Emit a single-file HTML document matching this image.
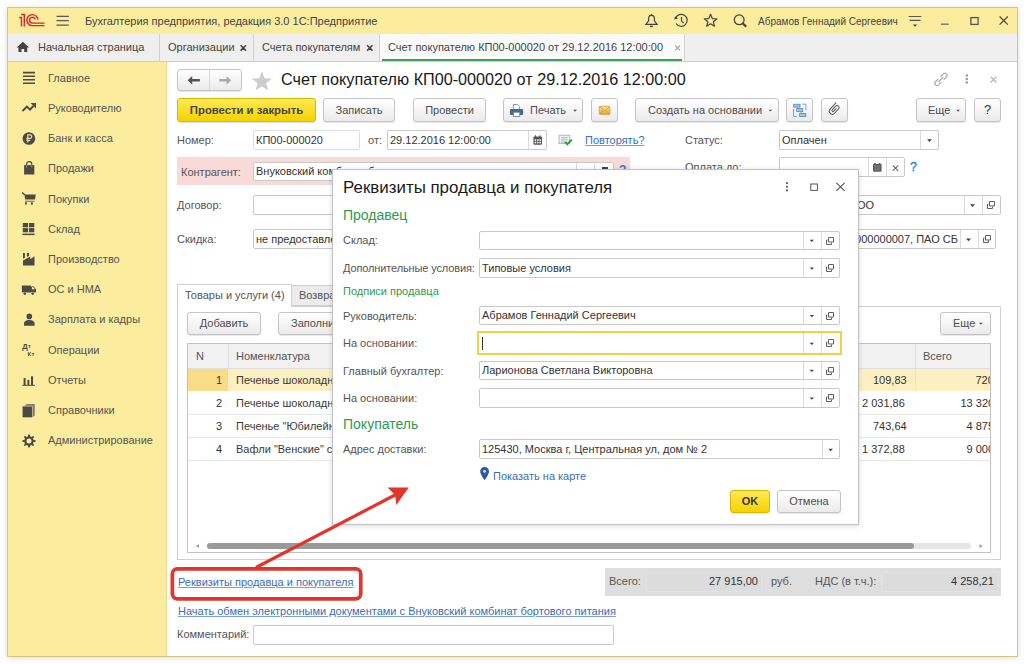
<!DOCTYPE html>
<html><head><meta charset="utf-8">
<style>
*{margin:0;padding:0}
html,body{width:1024px;height:664px;overflow:hidden;background:#fff;font-family:"Liberation Sans",sans-serif}
.a{position:absolute}
.tx{position:absolute;white-space:nowrap;font-size:11px;line-height:13px;color:#555}
.fld{position:absolute;box-sizing:border-box;border:1px solid #c9c9c9;border-radius:2px;background:#fff;font-size:11px;color:#333;white-space:nowrap;overflow:hidden;padding-left:2px}
.sep{position:absolute;top:0;bottom:0;width:1px;background:#dadada}
.btn{position:absolute;box-sizing:border-box;border:1px solid #c4c4c4;border-radius:3px;background:linear-gradient(#ffffff,#ebebeb);box-shadow:0 1px 1px rgba(0,0,0,.10);font-size:11px;color:#4d4d4d;text-align:center;white-space:nowrap}
.lnk{color:#3b6cb7;text-decoration:underline;text-decoration-color:#7f9fd0}
.grn{color:#2f9a4f}
</style></head>
<body>
<div class="a" style="left:0;top:0;width:1024px;height:664px;overflow:hidden">

<!-- window -->
<div class="a" style="left:7px;top:7px;width:1011px;height:650px;box-sizing:border-box;border:1px solid #d5c679;background:#fff;box-shadow:0 1px 6px rgba(0,0,0,.14)"></div>

<!-- title bar -->
<div class="a" style="left:8px;top:8px;width:1009px;height:26px;background:#fbec9e"></div>
<div class="tx" style="left:85px;top:15px;color:#444">Бухгалтерия предприятия, редакция 3.0 1С:Предприятие</div>
<div class="tx" style="left:758px;top:15px;font-size:10px;color:#444">Абрамов Геннадий Сергеевич</div>

<!-- tab bar -->
<div class="a" style="left:8px;top:34px;width:1009px;height:28px;background:#efefef;border-bottom:1px solid #cfcfcf;box-sizing:border-box"></div>
<div class="tx" style="left:38px;top:41px;color:#444">Начальная страница</div>
<div class="a" style="left:159px;top:34px;width:1px;height:27px;background:#d2d2d2"></div>
<div class="tx" style="left:168px;top:41px;color:#444">Организации</div>
<div class="a" style="left:253px;top:34px;width:1px;height:27px;background:#d2d2d2"></div>
<div class="tx" style="left:262px;top:41px;color:#444">Счета покупателям</div>
<div class="a" style="left:379px;top:34px;width:1px;height:27px;background:#d2d2d2"></div>
<div class="a" style="left:380px;top:34px;width:304px;height:27px;background:#fafafa"></div>
<div class="a" style="left:382px;top:59px;width:300px;height:2px;background:#3aa05a"></div>
<div class="tx" style="left:388px;top:41px;color:#444">Счет покупателю КП00-000020 от 29.12.2016 12:00:00</div>
<div class="a" style="left:684px;top:34px;width:1px;height:27px;background:#d2d2d2"></div>

<!-- sidebar -->
<div class="a" style="left:8px;top:62px;width:158px;height:594px;background:#fbec9e"></div><div class="a" style="left:166px;top:62px;width:1px;height:594px;background:#e4d896"></div>
<div class="tx" style="left:48px;top:72px">Главное</div>
<div class="tx" style="left:48px;top:102px">Руководителю</div>
<div class="tx" style="left:48px;top:132px">Банк и касса</div>
<div class="tx" style="left:48px;top:162px">Продажи</div>
<div class="tx" style="left:48px;top:193px">Покупки</div>
<div class="tx" style="left:48px;top:223px">Склад</div>
<div class="tx" style="left:48px;top:253px">Производство</div>
<div class="tx" style="left:48px;top:283px">ОС и НМА</div>
<div class="tx" style="left:48px;top:313px">Зарплата и кадры</div>
<div class="tx" style="left:48px;top:344px">Операции</div>
<div class="tx" style="left:48px;top:374px">Отчеты</div>
<div class="tx" style="left:48px;top:404px">Справочники</div>
<div class="tx" style="left:48px;top:434px">Администрирование</div>

<!-- CONTENT -->
<!-- nav -->
<div class="btn" style="left:177px;top:69px;width:65px;height:22px"></div>
<div class="a" style="left:209px;top:70px;width:1px;height:20px;background:#d6d6d6"></div>
<div class="tx" style="left:281px;top:69px;font-size:16.2px;line-height:20px;color:#1a1a1a">Счет покупателю КП00-000020 от 29.12.2016 12:00:00</div>

<!-- toolbar -->
<div class="btn" style="left:177px;top:98px;width:139px;height:24px;line-height:22px;background:linear-gradient(#ffea55,#f6d200);border-color:#d8b800;font-weight:bold;font-size:11.3px;color:#454545">Провести и закрыть</div>
<div class="btn" style="left:323px;top:98px;width:72px;height:24px;line-height:22px">Записать</div>
<div class="btn" style="left:413px;top:98px;width:73px;height:24px;line-height:22px">Провести</div>
<div class="btn" style="left:503px;top:98px;width:80px;height:24px;line-height:22px;text-align:left;padding-left:26px">Печать</div>
<div class="btn" style="left:591px;top:98px;width:27px;height:24px"></div>
<div class="btn" style="left:635px;top:98px;width:144px;height:24px;line-height:22px;text-align:left;padding-left:12px">Создать на основании</div>
<div class="btn" style="left:786px;top:98px;width:27px;height:24px"></div>
<div class="btn" style="left:821px;top:98px;width:27px;height:24px"></div>
<div class="btn" style="left:916px;top:98px;width:50px;height:24px;line-height:22px;text-align:left;padding-left:11px">Еще</div>
<div class="btn" style="left:974px;top:98px;width:27px;height:24px;line-height:22px;font-size:13px;color:#333">?</div>

<!-- row 1 -->
<div class="tx" style="left:177px;top:134px">Номер:</div>
<div class="fld" style="left:253px;top:130px;width:107px;height:20px;line-height:18px;border-color:#dcdcdc">КП00-000020</div>
<div class="tx" style="left:368px;top:134px">от:</div>
<div class="fld" style="left:387px;top:130px;width:160px;height:20px;line-height:18px">29.12.2016 12:00:00<div class="sep" style="left:140px"></div></div>
<div class="tx lnk" style="left:585px;top:134px">Повторять?</div>
<div class="tx" style="left:685px;top:134px">Статус:</div>
<div class="fld" style="left:779px;top:130px;width:160px;height:20px;line-height:18px">Оплачен<div class="sep" style="left:140px"></div></div>

<!-- row 2 -->
<div class="a" style="left:177px;top:157px;width:453px;height:28px;background:#fad9d9"></div>
<div class="tx" style="left:181px;top:166px">Контрагент:</div>
<div class="fld" style="left:253px;top:162px;width:361px;height:19px;line-height:17px">Внуковский комбинат бортового питания<div class="sep" style="left:322px"></div><div class="sep" style="left:340px"></div></div>
<div class="tx" style="left:619px;top:164px;color:#2a7fd0;font-weight:bold;font-size:12px">?</div><div class="a" style="left:602px;top:167px;width:6px;height:2px;background:#444"></div>
<div class="tx" style="left:685px;top:161px">Оплата до:</div>
<div class="fld" style="left:779px;top:157px;width:126px;height:20px"><div class="sep" style="left:88px"></div><div class="sep" style="left:106px"></div></div>
<div class="tx" style="left:910px;top:160.5px;color:#1f80d0;font-size:12.5px;-webkit-text-stroke:0.3px #1f80d0">?</div>

<!-- row 3 -->
<div class="tx" style="left:177px;top:199px">Договор:</div>
<div class="fld" style="left:253px;top:195px;width:200px;height:20px"></div>
<div class="fld" style="left:700px;top:195px;width:301px;height:20px;line-height:18px"><div class="a" style="right:126px;top:0">Торговый дом "Комплексный" ООО</div><div class="sep" style="left:263px"></div><div class="sep" style="left:281px"></div></div>

<!-- row 4 -->
<div class="tx" style="left:177px;top:233px">Скидка:</div>
<div class="fld" style="left:253px;top:229px;width:200px;height:20px;line-height:18px">не предоставлена</div>
<div class="fld" style="left:700px;top:229px;width:296px;height:20px;line-height:18px"><div class="a" style="left:0;top:0;width:259px;height:18px;overflow:hidden"><div class="a" style="right:2px;top:0">40702810400000000007, ПАО СБ</div></div><div class="sep" style="left:259px"></div><div class="sep" style="left:277px"></div></div>

<!-- tabs -->
<div class="a" style="left:177px;top:306px;width:824px;height:254px;box-sizing:border-box;border:1px solid #d0d0d0;border-top:1px solid #d0d0d0"></div>
<div class="a" style="left:291px;top:285px;width:60px;height:21px;background:#ececec;border:1px solid #d0d0d0;box-sizing:border-box"></div>
<div class="tx" style="left:299px;top:289px">Возврат</div>
<div class="a" style="left:177px;top:284px;width:115px;height:23px;background:#fff;border:1px solid #d0d0d0;border-bottom:none;box-sizing:border-box"></div>
<div class="tx" style="left:185px;top:289px">Товары и услуги (4)</div>

<div class="btn" style="left:187px;top:312px;width:74px;height:23px;line-height:21px">Добавить</div>
<div class="btn" style="left:278px;top:312px;width:80px;height:23px;line-height:21px;text-align:left;padding-left:12px">Заполнить</div>
<div class="btn" style="left:940px;top:312px;width:51px;height:23px;line-height:21px;text-align:left;padding-left:12px">Еще</div>

<!-- table -->
<div class="a" style="left:187px;top:343px;width:804px;height:210px;box-sizing:border-box;border:1px solid #c2c2c2;overflow:hidden">
  <div class="a" style="left:0;top:0;width:802px;height:24px;background:#f2f2f2;border-bottom:1px solid #dedede"></div>
  <div class="a" style="left:40px;top:0;width:1px;height:24px;background:#dcdcdc"></div>
  <div class="a" style="left:727px;top:0;width:1px;height:24px;background:#dcdcdc"></div>
  <div class="tx" style="left:8px;top:6px">N</div>
  <div class="tx" style="left:48px;top:6px">Номенклатура</div>
  <div class="tx" style="left:735px;top:6px">Всего</div>
  <div class="a" style="left:0;top:25px;width:802px;height:22px;background:#fcf0c3"></div>
  <div class="a" style="left:0;top:25px;width:40px;height:22px;background:#f8dc88"></div><div class="a" style="left:727px;top:25px;width:1px;height:22px;background:#f3e6b8"></div>
  <div class="a" style="left:0;top:70px;width:802px;height:1px;background:#e8e8e8"></div>
  <div class="a" style="left:0;top:93px;width:802px;height:1px;background:#e8e8e8"></div>
  <div class="a" style="left:0;top:116px;width:802px;height:1px;background:#e8e8e8"></div>
  <div class="tx" style="left:28px;top:30px;color:#333">1</div>
  <div class="tx" style="left:28px;top:53px;color:#333">2</div>
  <div class="tx" style="left:28px;top:76px;color:#333">3</div>
  <div class="tx" style="left:28px;top:99px;color:#333">4</div>
  <div class="tx" style="left:48px;top:30px;color:#3a3a3a">Печенье шоколадное</div>
  <div class="tx" style="left:48px;top:53px;color:#3a3a3a">Печенье шоколадное</div>
  <div class="tx" style="left:48px;top:76px;color:#3a3a3a">Печенье "Юбилейное"</div>
  <div class="tx" style="left:48px;top:99px;color:#3a3a3a">Вафли "Венские" с</div>
  <div class="tx" style="left:685px;top:30px;color:#333">109,83</div>
  <div class="tx" style="left:674px;top:53px;color:#333">2 031,86</div>
  <div class="tx" style="left:685px;top:76px;color:#333">743,64</div>
  <div class="tx" style="left:674px;top:99px;color:#333">1 372,88</div>
  <div class="tx" style="left:787.5px;top:30px;color:#333">720,83</div>
  <div class="tx" style="left:772.5px;top:53px;color:#333">13 320,00</div>
  <div class="tx" style="left:778.5px;top:76px;color:#333">4 875,00</div>
  <div class="tx" style="left:778.5px;top:99px;color:#333">9 000,00</div>
  <div class="a" style="left:19px;top:198.6px;width:764px;height:6.6px;border-radius:4px;background:#e6e6e6"></div>
  <div class="a" style="left:19px;top:198.6px;width:707px;height:6.6px;border-radius:4px;background:#9a9a9a"></div>
</div>

<!-- totals -->
<div class="a" style="left:605px;top:568px;width:396px;height:28px;background:#dedede"></div><div class="a" style="left:646px;top:572px;width:116px;height:20px;box-sizing:border-box;border:1px solid #e3e3e3;border-radius:2px;background:#dcdcdc"></div><div class="a" style="left:882px;top:572px;width:117px;height:20px;box-sizing:border-box;border:1px solid #e3e3e3;border-radius:2px;background:#dcdcdc"></div>
<div class="tx" style="left:609px;top:575px">Всего:</div>
<div class="tx" style="left:709px;top:575px;color:#333">27 915,00</div>
<div class="tx" style="left:771px;top:575px">руб.</div>
<div class="tx" style="left:815px;top:575px">НДС (в т.ч.):</div>
<div class="tx" style="left:951px;top:575px;color:#333">4 258,21</div>

<!-- links -->
<div class="tx lnk" style="left:178px;top:575.5px">Реквизиты продавца и покупателя</div>
<div class="tx lnk" style="left:178px;top:604.5px">Начать обмен электронными документами с Внуковский комбинат бортового питания</div>
<div class="tx" style="left:177px;top:628px">Комментарий:</div>
<div class="fld" style="left:253px;top:625px;width:361px;height:20px"></div>

<svg class="a" style="left:0;top:0" width="1024" height="664">
<!-- 1C logo -->
<g fill="none" stroke="#d9262a" stroke-width="1.45">
<path d="M19.2 17.4 H21.5 V26.5 M21.1 14.5 H24.3 V26.5"/>
<path d="M37.9 19.6 A5.5 5.5 0 1 0 32.2 25.6 H44.5"/>
<path d="M35.2 19.4 A2.9 2.9 0 1 0 32.3 23.1 H44.5"/>
</g>
<!-- hamburger -->
<path d="M56.5 16.4 H68.8 M56.5 20.7 H68.8 M56.5 25.1 H68.8" stroke="#5a5a50" stroke-width="1.3"/>
<!-- bell -->
<g fill="none" stroke="#444" stroke-width="1.2">
<path d="M645.9 24.4 L648.6 20.8 V18.6 C648.6 16.6 650 15.4 651.5 15.4 C653 15.4 654.4 16.6 654.4 18.6 V20.8 L657.1 24.4 Z"/>
</g>
<path d="M650 26.4 H652.8" stroke="#444" stroke-width="1.5"/>
<circle cx="651.5" cy="14.8" r="0.8" fill="#444"/>
<!-- history -->
<g fill="none" stroke="#444" stroke-width="1.2">
<path d="M675.56 18.25 A6 6 0 1 1 676.11 23.48"/>
<path d="M681.5 17 V20.8 L683.6 23.2"/>
</g>
<path d="M674.2 19.4 L675.1 16.3 L677.9 18.7 Z" fill="#444"/>
<!-- star outline -->
<polygon points="710.60,14.30 712.30,18.55 716.88,18.86 713.36,21.80 714.48,26.24 710.60,23.80 706.72,26.24 707.84,21.80 704.32,18.86 708.90,18.55" fill="none" stroke="#444" stroke-width="1.2" stroke-linejoin="round"/>
<!-- search -->
<circle cx="739.2" cy="19.8" r="4.9" fill="none" stroke="#444" stroke-width="1.3"/>
<path d="M742.6 23.2 L746.2 26.6" stroke="#444" stroke-width="2.2"/>
<!-- filter -->
<path d="M908.8 16.5 H921.3 M909.6 20.3 H920.5" stroke="#555" stroke-width="1.2"/>
<path d="M912.8 24.5 H917.2 L915 26.8 Z" fill="#444"/>
<!-- min max close -->
<path d="M941 24.2 H948.7" stroke="#777" stroke-width="1.4"/>
<rect x="970.9" y="17.6" width="7.2" height="6.8" fill="none" stroke="#555" stroke-width="1.3"/>
<path d="M999.6 16.5 L1007.8 24.6 M1007.8 16.5 L999.6 24.6" stroke="#444" stroke-width="1.2"/>
<!-- home -->
<path d="M22.85 41.8 L16.6 47.6 H18.5 V52 H21.5 V48.9 H24.2 V52 H27.2 V47.6 H29.1 Z" fill="#444"/>
<!-- tab x -->
<path d="M240.6 45.2 L246 50.6 M246 45.2 L240.6 50.6 M367.1 45.2 L372.5 50.6 M372.5 45.2 L367.1 50.6" stroke="#444" stroke-width="1.5"/>
<path d="M675 45.5 L680 50.5 M680 45.5 L675 50.5" stroke="#aaa" stroke-width="1.1"/>
<!-- sidebar icons -->
<g fill="#4a4a48">
<path d="M23 72.6 H35 M23 76.2 H35 M23 79.8 H35 M23 83.3 H35" stroke="#4a4a48" stroke-width="1.6"/>
<path d="M22.5 111 L26.9 106.6 L30 109.6 L33.4 106" fill="none" stroke="#4a4a48" stroke-width="2"/>
<path d="M30.6 103.1 H36 V108.5 Z"/>
<circle cx="28.9" cy="138.5" r="6.3"/>
<path d="M27.8 142.5 V134.9 H30.1 A1.7 1.7 0 0 1 30.1 138.3 H26.3 M26.3 140.4 H30.2" fill="none" stroke="#e9dca0" stroke-width="1.25"/>
<rect x="24.1" y="165.1" width="10.2" height="9.4"/>
<path d="M26.6 167.6 V164.2 A2.6 2.6 0 0 1 31.8 164.2 V167.6" fill="none" stroke="#4a4a48" stroke-width="1.2"/>
<path d="M26.6 165.4 V167.2 M31.8 165.4 V167.2" stroke="#b9ad74" stroke-width="1"/>
<path d="M22.2 192.5 L24.8 195" fill="none" stroke="#4a4a48" stroke-width="1.4"/>
<path d="M24.4 194.6 H35.7 L35 199.6 H25.2 Z"/>
<rect x="25" y="200.7" width="9.6" height="1.2" fill="#8a8360"/>
<rect x="25" y="202.3" width="1.8" height="2.3"/><rect x="31" y="202.3" width="1.8" height="2.3"/>
<rect x="22.8" y="223" width="5.3" height="4.3"/><rect x="29" y="223" width="5.3" height="4.3"/>
<rect x="22.8" y="228.1" width="5.3" height="4.2"/><rect x="29" y="228.1" width="5.3" height="4.2"/>
<rect x="22.4" y="233.6" width="12.2" height="1.5"/>
<path d="M23 265.5 V260.6 L30.2 256.4 V259.2 L34.5 256.2 V265.5 Z"/>
<path d="M23 253 H24.9 V257.7 L23 258.8 Z M26.9 253 H29.1 V255.7 L26.9 257 Z"/>
<path d="M21.9 285.4 H30.9 V286.5 H33.6 L36 289.2 V292.6 H21.9 Z"/>
<path d="M31.9 287.2 H33.3 L35 289.2 H31.9 Z" fill="#fbec9e"/>
<circle cx="24.8" cy="293.6" r="1.9" fill="#fbec9e"/><circle cx="32.7" cy="293.6" r="1.9" fill="#fbec9e"/>
<circle cx="24.8" cy="293.6" r="1.3"/><circle cx="32.7" cy="293.6" r="1.3"/>
<circle cx="29.3" cy="316.4" r="2.8"/>
<path d="M24 325.8 V323.6 C24 321 26.3 319.9 29.3 319.9 C32.3 319.9 34.6 321 34.6 323.6 V325.8 Z"/>
<text x="22.2" y="348.5" font-size="7.6" font-weight="bold" font-family="Liberation Sans">Д</text>
<text x="27.9" y="348.3" font-size="6" font-weight="bold" font-family="Liberation Sans">т</text>
<text x="27.6" y="355.8" font-size="6" font-weight="bold" font-family="Liberation Sans">К</text>
<text x="31.4" y="355.8" font-size="6" font-weight="bold" font-family="Liberation Sans">т</text>
<rect x="23.6" y="378.1" width="2" height="7"/><rect x="27.4" y="379.9" width="1.9" height="5.2"/><rect x="31" y="376.3" width="2" height="8.8"/>
<rect x="22.3" y="384.8" width="12.5" height="1"/>
<path d="M24.6 405.8 L26.8 404 H34.7 V415.4 L32.5 417.3 V405.8 Z" fill="#777"/>
<rect x="22.6" y="406.4" width="9.4" height="10.9"/>
<polygon points="35.57,440.35 35.57,441.65 33.40,442.34 33.06,443.17 34.10,445.19 33.19,446.10 31.17,445.06 30.34,445.40 29.65,447.57 28.35,447.57 27.66,445.40 26.83,445.06 24.81,446.10 23.90,445.19 24.94,443.17 24.60,442.34 22.43,441.65 22.43,440.35 24.60,439.66 24.94,438.83 23.90,436.81 24.81,435.90 26.83,436.94 27.66,436.60 28.35,434.43 29.65,434.43 30.34,436.60 31.17,436.94 33.19,435.90 34.10,436.81 33.06,438.83 33.40,439.66"/>
<circle cx="29" cy="441" r="2.5" fill="#fbec9e"/>
</g>
<!-- nav arrows -->
<path d="M187.7 80.3 L192.2 76 V79 H199.9 V81.6 H192.2 V84.8 Z" fill="#555"/>
<path d="M231.1 80.3 L226.6 76 V79 H219.2 V81.6 H226.6 V84.8 Z" fill="#aaa"/>
<polygon points="261.85,71.13 264.50,78.16 272.00,78.50 266.13,83.19 268.12,90.43 261.85,86.30 255.58,90.43 257.57,83.19 251.70,78.50 259.20,78.16" fill="#cdcdcd"/>
<!-- link dots x -->
<g fill="none" stroke="#b0b0b0" stroke-width="1.3" transform="rotate(-45 940.9 79.4)">
<path d="M939.2 81.6 H935.4 A2.2 2.2 0 0 1 935.4 77.2 H939.2"/>
<path d="M942.6 77.2 H946.4 A2.2 2.2 0 0 1 946.4 81.6 H942.6"/>
<path d="M937.6 79.4 H944.2"/>
</g>
<circle cx="966.8" cy="75.6" r="1.25" fill="#9a9a9a"/><circle cx="966.8" cy="79" r="1.25" fill="#9a9a9a"/><circle cx="966.8" cy="82.4" r="1.25" fill="#9a9a9a"/>
<path d="M990.6 76.6 L996.5 82.5 M996.5 76.6 L990.6 82.5" stroke="#b0b0b0" stroke-width="1.1"/>
<!-- printer -->
<path d="M513.4 109 V104.5 H517.6 L519.6 106.5 V109" fill="#fff" stroke="#7d8ea3" stroke-width="0.9"/>
<rect x="510" y="108.9" width="13.1" height="6" rx="1.2" fill="#41689c"/>
<rect x="513.4" y="112.2" width="6.4" height="4.2" fill="#fff" stroke="#6d7f96" stroke-width="0.9"/>
<!-- dropdown triangles on buttons -->
<path d="M573.1 109.8 H577 L575.05 111.7 Z M768.6 109.7 H772.2 L770.4 111.6 Z M956.2 109.8 H960 L958.1 111.7 Z M979 322.8 H982.8 L980.9 324.7 Z" fill="#555"/>
<!-- envelope -->
<defs><linearGradient id="env" x1="0" y1="0" x2="0" y2="1"><stop offset="0" stop-color="#f8e3a0"/><stop offset="1" stop-color="#e2a636"/></linearGradient></defs>
<rect x="599.3" y="106.3" width="10.6" height="8.1" rx="0.8" fill="url(#env)" stroke="#d89d30" stroke-width="0.8"/>
<path d="M599.8 106.8 L604.6 110.8 L609.4 106.8 M599.8 114 L603 111 M609.4 114 L606.2 111" fill="none" stroke="#c98f2c" stroke-width="0.7"/>
<!-- struct icon -->
<g fill="#a9c4e0" stroke="#5f8fbf" stroke-width="0.9">
<rect x="793.7" y="104.3" width="6.3" height="2.8"/>
<rect x="796.7" y="108.6" width="6" height="3"/>
<rect x="799.6" y="113.5" width="6.2" height="3"/>
</g>
<path d="M793.6 109 V116.6 H796.6 M802.3 104.2 H805.9 V110.4 M797.6 107.2 V108.6 M801 111.6 V113.5" fill="none" stroke="#6d9ac8" stroke-width="0.9"/>
<!-- clip -->
<g transform="rotate(-47 834 109.4)">
<path d="M836.3 110.4 H832.5 A1 1 0 0 1 832.5 108.4 H837.5 A2 2 0 0 1 837.5 112.4 H831.5 A3 3 0 0 1 831.5 106.4 H840.4" fill="none" stroke="#555" stroke-width="0.95"/>
</g>
<!-- calendar -->
<rect x="533.4" y="136.4" width="8.6" height="8.3" rx="1" fill="#555"/>
<rect x="534.8" y="135.3" width="1.2" height="2" fill="#555"/><rect x="539.4" y="135.3" width="1.2" height="2" fill="#555"/>
<g fill="#fff"><rect x="534.6" y="139.3" width="1.6" height="1.5"/><rect x="537" y="139.3" width="1.6" height="1.5"/><rect x="539.4" y="139.3" width="1.6" height="1.5"/><rect x="534.6" y="141.8" width="1.6" height="1.5"/><rect x="537" y="141.8" width="1.6" height="1.5"/><rect x="539.4" y="141.8" width="1.6" height="1.5"/></g>
<!-- calendar 2 (oplata) -->
<rect x="873" y="164" width="8.6" height="7.8" rx="1" fill="#5a5a5a"/>
<circle cx="875" cy="164" r="1.1" fill="#5a5a5a"/><circle cx="879.6" cy="164" r="1.1" fill="#5a5a5a"/>
<path d="M873.6 166 H881 M875.4 166.5 V171 M877.3 166.5 V171 M879.2 166.5 V171" stroke="#9a9a9a" stroke-width="0.6"/>
<path d="M892.8 165.4 L898.2 170.8 M898.2 165.4 L892.8 170.8" stroke="#666" stroke-width="1.05"/>
<!-- note icon -->
<rect x="559" y="135.2" width="10.8" height="8.4" fill="#eef2f7" stroke="#9fb2c8" stroke-width="0.9"/>
<path d="M561 137.8 H567.5 M561 139.9 H567.5 M561 142 H565" stroke="#9aa6b4" stroke-width="0.8"/>
<path d="M565.2 141.8 L567.3 144.2 L571.8 139.6" fill="none" stroke="#2aa12a" stroke-width="2"/>
<!-- field dropdown triangles -->
<path d="M927.1 139.3 H931.9 L929.5 142 Z M970 204.2 H975 L972.5 207 Z M966 238.5 H971 L968.5 241.3 Z" fill="#444"/>
<!-- open icons right fields -->
<g fill="none" stroke="#606060" stroke-width="1">
<path d="M989.5 201.5 H994.5 V206 H989.5 Z M988.5 204 H987.5 V208.5 H992.5 V206.5"/>
<path d="M985.5 235.5 H990.5 V240 H985.5 Z M984.5 238 H983.5 V242.5 H988.5 V240.5"/>
</g>
<!-- scrollbar arrows -->
<path d="M199 544.3 L195.8 546.1 L199 547.9 Z M979.5 544.3 L982.7 546.1 L979.5 547.9 Z" fill="#9a9a9a"/>
</svg>

<!-- DIALOG -->
<div class="a" style="left:332px;top:169px;width:527px;height:356px;background:#fff;border:1px solid #c2c2c2;box-sizing:border-box;box-shadow:0 1px 5px rgba(0,0,0,.16)">
</div>
<div class="tx" style="left:343px;top:178px;font-size:16.9px;line-height:20px;color:#1a1a1a">Реквизиты продавца и покупателя</div>
<div class="tx grn" style="left:343px;top:207px;font-size:14px;line-height:17px">Продавец</div>
<div class="tx" style="left:343px;top:234px">Склад:</div>
<div class="fld" style="left:479px;top:231px;width:361px;height:19px;line-height:17px"><div class="sep" style="left:323px"></div><div class="sep" style="left:341px"></div></div>
<div class="tx" style="left:343px;top:262px;letter-spacing:-0.13px">Дополнительные условия:</div>
<div class="fld" style="left:479px;top:258px;width:361px;height:20px;line-height:18px">Типовые условия<div class="sep" style="left:323px"></div><div class="sep" style="left:341px"></div></div>
<div class="tx grn" style="left:343px;top:285px">Подписи продавца</div>
<div class="tx" style="left:343px;top:310px">Руководитель:</div>
<div class="fld" style="left:479px;top:306px;width:361px;height:19px;line-height:17px">Абрамов Геннадий Сергеевич<div class="sep" style="left:323px"></div><div class="sep" style="left:341px"></div></div>
<div class="tx" style="left:343px;top:337px">На основании:</div>
<div class="fld" style="left:477px;top:331px;width:365px;height:24px;border:2px solid #f6cf48;border-radius:0"><div class="a" style="left:3px;top:4px;width:1.2px;height:13px;background:#333"></div><div class="sep" style="left:324px"></div><div class="sep" style="left:342px"></div></div>
<div class="tx" style="left:343px;top:365px">Главный бухгалтер:</div>
<div class="fld" style="left:479px;top:361px;width:361px;height:19px;line-height:17px">Ларионова Светлана Викторовна<div class="sep" style="left:323px"></div><div class="sep" style="left:341px"></div></div>
<div class="tx" style="left:343px;top:392px">На основании:</div>
<div class="fld" style="left:479px;top:388px;width:361px;height:20px"><div class="sep" style="left:323px"></div><div class="sep" style="left:341px"></div></div>
<div class="tx grn" style="left:343px;top:416px;font-size:14px;line-height:17px">Покупатель</div>
<div class="tx" style="left:343px;top:443px">Адрес доставки:</div>
<div class="fld" style="left:479px;top:439px;width:361px;height:20px;line-height:18px">125430, Москва г, Центральная ул, дом № 2<div class="sep" style="left:342px"></div></div>
<div class="tx" style="left:493px;top:470px;color:#3b6cb7">Показать на карте</div>
<div class="btn" style="left:730px;top:490px;width:40px;height:23px;line-height:21px;background:linear-gradient(#ffea55,#f6d200);border-color:#d8b800;font-weight:bold;color:#333">OK</div>
<div class="btn" style="left:777px;top:490px;width:64px;height:23px;line-height:21px">Отмена</div>

<svg class="a" style="left:0;top:0" width="1024" height="664">
<circle cx="787" cy="183.2" r="1.15" fill="#666"/><circle cx="787" cy="186.8" r="1.15" fill="#666"/><circle cx="787" cy="190.4" r="1.15" fill="#666"/>
<rect x="810.8" y="184" width="6.6" height="6.4" fill="none" stroke="#555" stroke-width="1"/>
<path d="M836.4 182.8 L844.6 190.9 M844.6 182.8 L836.4 190.9" stroke="#555" stroke-width="1.1"/>
<path d="M809.6 239.8 H814 L811.8 242.1 Z M809.6 267.5 H814 L811.8 269.8 Z M809.6 315.0 H814 L811.8 317.3 Z M809.6 342.7 H814 L811.8 345.0 Z M809.6 369.7 H814 L811.8 372.0 Z M809.6 397.5 H814 L811.8 399.8 Z M828.4 448.7 H833 L830.7 451.3 Z" fill="#444"/>
<path d="M828.5 237.5 H833.5 V242.0 H828.5 Z M827.5 240.0 H826.5 V244.5 H831.5 V242.5 M828.5 264.5 H833.5 V269.0 H828.5 Z M827.5 267.0 H826.5 V271.5 H831.5 V269.5 M828.5 312.5 H833.5 V317.0 H828.5 Z M827.5 315.0 H826.5 V319.5 H831.5 V317.5 M828.5 339.5 H833.5 V344.0 H828.5 Z M827.5 342.0 H826.5 V346.5 H831.5 V344.5 M828.5 367.5 H833.5 V372.0 H828.5 Z M827.5 370.0 H826.5 V374.5 H831.5 V372.5 M828.5 394.5 H833.5 V399.0 H828.5 Z M827.5 397.0 H826.5 V401.5 H831.5 V399.5" fill="none" stroke="#606060" stroke-width="1"/>
<path d="M484.6 467 C482 467 480.2 469 480.2 471.4 C480.2 474.4 484.6 480 484.6 480 C484.6 480 489 474.4 489 471.4 C489 469 487.2 467 484.6 467 Z" fill="#2c5aa0"/><circle cx="484.6" cy="471.4" r="1.4" fill="#dfe8f5"/>
</svg>
<!-- annotation -->

<svg class="a" style="left:0;top:0" width="1024" height="664">
  <rect x="172.35" y="568.95" width="188.4" height="29.9" rx="5" fill="none" stroke="#e2352c" stroke-width="3.7"/>
  <line x1="256" y1="567.5" x2="396" y2="494.5" stroke="#e2352c" stroke-width="3.2"/>
  <polygon points="387.6,487.6 408.8,487.4 396.3,505 395.2,495.2" fill="#e2352c"/>
</svg>

</div>
</body></html>
